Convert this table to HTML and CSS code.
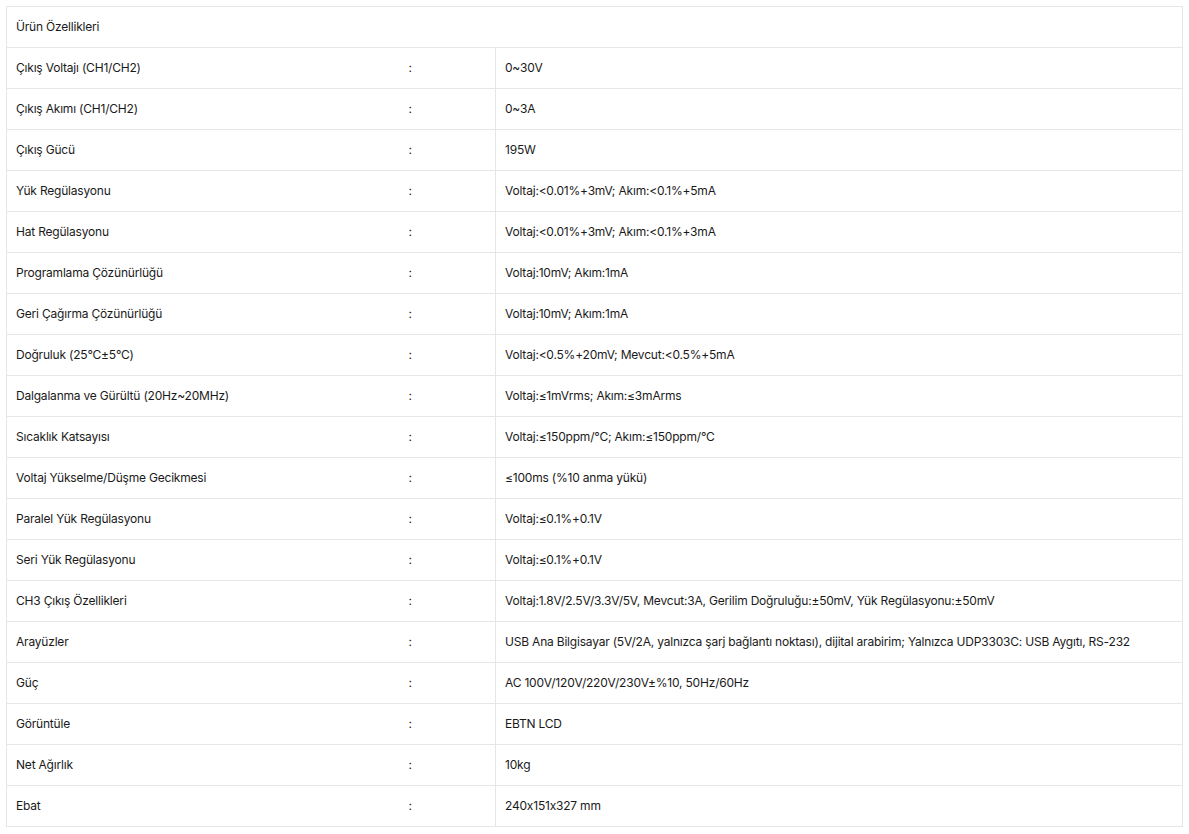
FILE: index.html
```html
<!DOCTYPE html>
<html lang="tr">

<head>
    <meta charset="UTF-8">
    <meta name="viewport" content="width=device-width, initial-scale=1.0">
    <title>Ürün Özellikleri</title>
    <link rel="stylesheet" href="styles.css">
</head>

<body>
    <table class="spec-table">
        <colgroup>
            <col class="col-name">
            <col class="col-sep">
            <col>
        </colgroup>
        <thead>
            <tr>
                <th colspan="3">Ürün Özellikleri</th>
            </tr>
        </thead>
        <tbody>
            <tr><td>Çıkış Voltajı (CH1/CH2)</td><td>:</td><td class="value">0~30V</td></tr>
            <tr><td>Çıkış Akımı (CH1/CH2)</td><td>:</td><td class="value">0~3A</td></tr>
            <tr><td>Çıkış Gücü</td><td>:</td><td class="value">195W</td></tr>
            <tr><td>Yük Regülasyonu</td><td>:</td><td class="value">Voltaj:&lt;0.01%+3mV; Akım:&lt;0.1%+5mA</td></tr>
            <tr><td>Hat Regülasyonu</td><td>:</td><td class="value">Voltaj:&lt;0.01%+3mV; Akım:&lt;0.1%+3mA</td></tr>
            <tr><td>Programlama Çözünürlüğü</td><td>:</td><td class="value">Voltaj:10mV; Akım:1mA</td></tr>
            <tr><td>Geri Çağırma Çözünürlüğü</td><td>:</td><td class="value">Voltaj:10mV; Akım:1mA</td></tr>
            <tr><td>Doğruluk (25°C±5°C)</td><td>:</td><td class="value">Voltaj:&lt;0.5%+20mV; Mevcut:&lt;0.5%+5mA</td></tr>
            <tr><td>Dalgalanma ve Gürültü (20Hz~20MHz)</td><td>:</td><td class="value">Voltaj:≤1mVrms; Akım:≤3mArms</td></tr>
            <tr><td>Sıcaklık Katsayısı</td><td>:</td><td class="value">Voltaj:≤150ppm/°C; Akım:≤150ppm/°C</td></tr>
            <tr><td>Voltaj Yükselme/Düşme Gecikmesi</td><td>:</td><td class="value">≤100ms (%10 anma yükü)</td></tr>
            <tr><td>Paralel Yük Regülasyonu</td><td>:</td><td class="value">Voltaj:≤0.1%+0.1V</td></tr>
            <tr><td>Seri Yük Regülasyonu</td><td>:</td><td class="value">Voltaj:≤0.1%+0.1V</td></tr>
            <tr><td>CH3 Çıkış Özellikleri</td><td>:</td><td class="value">Voltaj:1.8V/2.5V/3.3V/5V, Mevcut:3A, Gerilim Doğruluğu:±50mV, Yük Regülasyonu:±50mV</td></tr>
            <tr><td>Arayüzler</td><td>:</td><td class="value">USB Ana Bilgisayar (5V/2A, yalnızca şarj bağlantı noktası), dijital arabirim; Yalnızca UDP3303C: USB Aygıtı, RS-232</td></tr>
            <tr><td>Güç</td><td>:</td><td class="value">AC 100V/120V/220V/230V±%10, 50Hz/60Hz</td></tr>
            <tr><td>Görüntüle</td><td>:</td><td class="value">EBTN LCD</td></tr>
            <tr><td>Net Ağırlık</td><td>:</td><td class="value">10kg</td></tr>
            <tr><td>Ebat</td><td>:</td><td class="value">240x151x327 mm</td></tr>
        </tbody>
    </table>
</body>

</html>
```

FILE: styles.css
```css
body {
    margin: 0;
    padding: 6px 6px 0 6px;
    font-family: Inter, "Noto Sans", sans-serif;
    font-size: 12px;
    letter-spacing: -0.2px;
    font-feature-settings: "calt" 0;
    color: #1a1a1a;
    background: #fff;
}

.spec-table {
    width: 1177px;
    border-collapse: collapse;
    table-layout: fixed;
    border: 1px solid #e6e6e6;
}

.col-name {
    width: 393px;
}

.col-sep {
    width: 96px;
}

.spec-table th,
.spec-table td {
    box-sizing: border-box;
    height: 41px;
    padding: 0 9px 2px 9px;
    text-align: left;
    font-weight: normal;
    border-top: 1px solid #e6e6e6;
    white-space: nowrap;
}

.spec-table .value {
    border-left: 1px solid #e6e6e6;
}
```
